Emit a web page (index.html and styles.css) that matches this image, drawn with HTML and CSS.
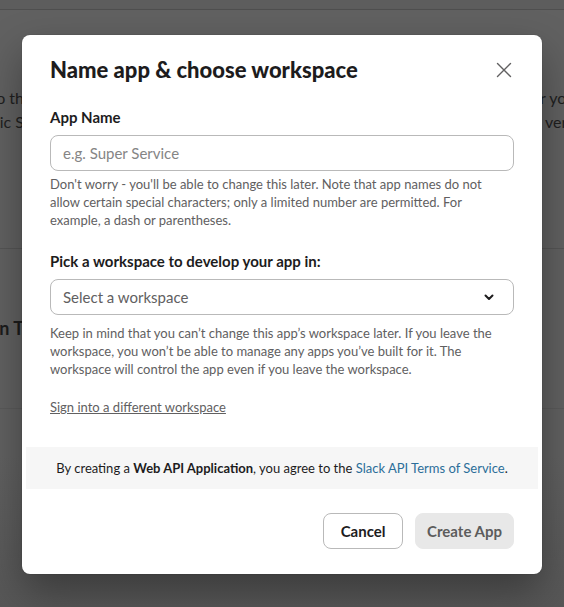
FILE: index.html
```html
<!DOCTYPE html>
<html lang="en">
<head>
<meta charset="utf-8">
<title>Name app &amp; choose workspace</title>
<link rel="stylesheet" href="styles.css">
</head>
<body>
<div class="page">
  <div class="topbar"></div>
  <section class="section section-intro">
    <div class="bg-row">
      <div class="bg-left"><span>Add new apps to th</span></div>
      <div class="bg-mid"></div>
      <div class="bg-right"><span>r your</span></div>
    </div>
    <div class="bg-row">
      <div class="bg-left"><span>the Public S</span></div>
      <div class="bg-mid"></div>
      <div class="bg-right indent"><span>ver</span></div>
    </div>
  </section>
  <section class="section section-second">
    <div class="bg-row heading">
      <div class="bg-left"><span>Your Apps in T</span></div>
      <div class="bg-mid"></div>
      <div class="bg-right"><span></span></div>
    </div>
  </section>
  <section class="section section-rest"></section>
</div>

<div class="overlay">
  <div class="modal" role="dialog" aria-labelledby="modal-title">
    <div class="modal-header">
      <h1 id="modal-title" class="modal-title">Name app &amp; choose workspace</h1>
      <button class="close-btn" aria-label="Close">
        <svg width="16" height="16" viewBox="0 0 16 16" aria-hidden="true">
          <path d="M1.5 1.5 L14.5 14.5 M14.5 1.5 L1.5 14.5" stroke="#616061" stroke-width="1.4" stroke-linecap="round" fill="none"/>
        </svg>
      </button>
    </div>
    <div class="modal-body">
      <label class="field-label" for="app-name">App Name</label>
      <input id="app-name" class="text-input" type="text" placeholder="e.g. Super Service">
      <p class="help help-first">Don't worry - you'll be able to change this later. Note that app names do not allow certain special characters; only a limited number are permitted. For example, a dash or parentheses.</p>

      <div class="field-label label-second">Pick a workspace to develop your app in:</div>
      <div class="select">
        <span class="select-text">Select a workspace</span>
        <svg class="chevron" width="10" height="7" viewBox="0 0 10 7" aria-hidden="true">
          <path d="M1.5 1.5 L5 5 L8.5 1.5" stroke="#1d1c1d" stroke-width="2" stroke-linecap="round" stroke-linejoin="round" fill="none"/>
        </svg>
      </div>
      <p class="help help-second">Keep in mind that you can’t change this app’s workspace later. If you leave the workspace, you won’t be able to manage any apps you’ve built for it. The workspace will control the app even if you leave the workspace.</p>

      <a class="sign-link" href="#">Sign into a different workspace</a>
    </div>
    <div class="terms">
      <p class="terms-text">By creating a <strong>Web API Application</strong>, you agree to the <a class="terms-link" href="#">Slack API Terms of Service</a>.</p>
    </div>
    <div class="modal-footer">
      <button class="btn btn-cancel">Cancel</button>
      <button class="btn btn-create">Create App</button>
    </div>
  </div>
</div>
</body>
</html>
```
FILE: styles.css
```css
* {
  box-sizing: border-box;
}

html, body {
  margin: 0;
  padding: 0;
  height: 100%;
}

body {
  font-family: Lato, "Noto Sans", "Liberation Sans", sans-serif;
  background: #606060;
  overflow: hidden;
  position: relative;
}

.page {
  width: 564px;
  height: 607px;
  display: flex;
  flex-direction: column;
  background: linear-gradient(#616161 0%, #616161 75%, #575757 100%);
}

.topbar {
  height: 10px;
  background: #5d5d5d;
  border-bottom: 1px solid #4f4f4f;
}

.section {
  border-bottom: 1px solid #555;
}

.section-intro {
  height: 239px;
  padding-top: 76px;
}

.section-second {
  height: 160px;
  padding-top: 67px;
  border-bottom-color: #5a5a5a;
}

.section-rest {
  flex: 1;
  border-bottom: none;
}

.bg-row {
  display: grid;
  grid-template-columns: 24px 1fr 24px;
  height: 24px;
  line-height: 24px;
  font-size: 16px;
  color: #1f1f1f;
  white-space: nowrap;
}

.bg-row.heading {
  font-size: 18px;
  font-weight: 700;
  color: #1c1c1c;
}

.bg-left {
  display: flex;
  justify-content: flex-end;
  overflow: hidden;
}

.bg-right {
  display: flex;
  justify-content: flex-start;
  overflow: hidden;
}

.bg-right.indent {
  padding-left: 5px;
}

.overlay {
  position: absolute;
  inset: 0;
  display: flex;
  align-items: flex-start;
  justify-content: flex-start;
  padding: 35px 22px 0;
}

.modal {
  width: 520px;
  background: #ffffff;
  border-radius: 8px;
  box-shadow: 0 18px 40px rgba(0, 0, 0, 0.35), 0 0 0 1px rgba(0, 0, 0, 0.05);
  color: #1d1c1d;
}

.modal-header {
  display: flex;
  align-items: center;
  justify-content: space-between;
  padding: 21px 28px 0;
}

.modal-title {
  margin: 0;
  font-size: 22px;
  line-height: 28px;
  font-weight: 900;
  color: #1d1c1d;
}

.close-btn {
  width: 20px;
  height: 20px;
  padding: 0;
  border: none;
  background: transparent;
  display: flex;
  align-items: center;
  justify-content: center;
  cursor: pointer;
}

.modal-body {
  padding: 22px 28px 0;
  display: flex;
  flex-direction: column;
  align-items: flex-start;
}

.field-label {
  display: block;
  font-size: 15px;
  line-height: 22px;
  font-weight: 700;
  color: #1d1c1d;
  margin-bottom: 7px;
}

.label-second {
  margin-top: 21px;
}

.text-input {
  width: 100%;
  height: 36px;
  border: 1px solid #b9b9b9;
  border-radius: 8px;
  padding: 0 12px;
  font-family: inherit;
  font-size: 15px;
  color: #1d1c1d;
  outline: none;
}

.text-input::placeholder {
  color: #858585;
}

.help {
  margin: 0;
  font-size: 13px;
  line-height: 18px;
  color: #616061;
}

.help-first {
  margin-top: 4px;
}

.help-second {
  margin-top: 9px;
}

.select {
  width: 100%;
  height: 36px;
  border: 1px solid #b9b9b9;
  border-radius: 8px;
  padding: 0 19px 0 12px;
  display: flex;
  align-items: center;
  justify-content: space-between;
}

.select-text {
  font-size: 15px;
  color: #616061;
}

.chevron {
  display: block;
}

.sign-link {
  margin-top: 20px;
  font-size: 13px;
  line-height: 18px;
  color: #616061;
  text-decoration: underline;
}

.terms {
  margin: 31px 4px 0;
  height: 42px;
  background: #f6f6f6;
  display: flex;
  align-items: center;
  justify-content: center;
}

.terms-text {
  margin: 0;
  font-size: 13px;
  line-height: 18px;
  color: #1d1c1d;
  white-space: nowrap;
}

.terms strong {
  font-weight: 700;
  color: #1d1c1d;
}

.terms-link {
  color: #2b6e99;
  text-decoration: none;
}

.modal-footer {
  display: flex;
  justify-content: flex-end;
  gap: 12px;
  padding: 24px 28px 25px;
}

.btn {
  height: 36px;
  min-width: 80px;
  padding: 0 11px;
  border-radius: 8px;
  font-family: inherit;
  font-size: 15px;
  font-weight: 700;
  cursor: pointer;
}

.btn-cancel {
  background: #ffffff;
  border: 1px solid #b9b9b9;
  color: #1d1c1d;
}

.btn-create {
  background: #e8e8e8;
  border: 1px solid #e8e8e8;
  color: #5c5c5c;
}
```
